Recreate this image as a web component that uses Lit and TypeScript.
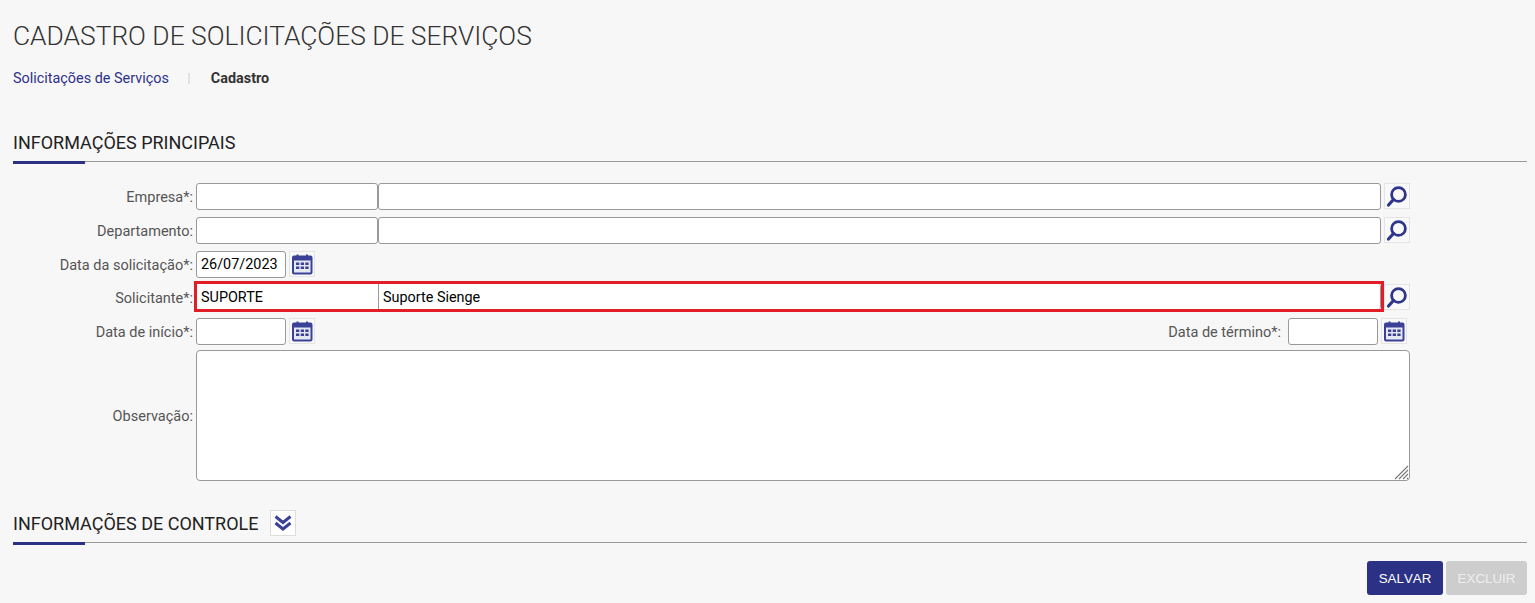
import { LitElement, html, css, svg } from 'lit';
import { customElement } from 'lit/decorators.js';

const searchIcon = svg`<circle cx="13.500" cy="10.500" r="6.900" fill="none" stroke="#2f3589" stroke-width="2.800"/><path d="M8.500 15.500 L3.500 21" stroke="#2f3589" stroke-width="3.200" stroke-linecap="round"/>`;

const calendarIcon = svg`<rect x="3" y="4.500" width="18.500" height="17" rx="1" fill="#e6e8f4" stroke="#3a4196" stroke-width="2"/>
  <path d="M3 4.500h18.500v4H3z" fill="#3a4196"/>
  <path d="M7.500 2.500v3M17 2.500v3" stroke="#3a4196" stroke-width="2"/>
  <path d="M6 10.500h3.300v2.600H6zM10.700 10.500H14v2.600h-3.300zM15.300 10.500h3.300v2.600h-3.300zM6 14.500h3.300v2.600H6zM10.700 14.500H14v2.600h-3.300zM15.300 14.500h3.300v2.600h-3.300z" fill="#3a4196"/>`;

const chevronsIcon = svg`<path d="M4.500 5.500 L12 11.500 L19.500 5.500 M4.500 12 L12 18 L19.500 12" fill="none" stroke="#3a4196" stroke-width="3"/>`;

const gripIcon = svg`<path d="M1 14 L14 1 M5 14 L14 5 M9 14 L14 9 M13 14 L14 13" stroke="#777" stroke-width="1.100"/>`;

@customElement('app-root')
export class AppRoot extends LitElement {
  static styles = css`
    :host {
      display: block;
      height: 603px;
      overflow: hidden;
      background: #f7f7f7;
      font-family: Roboto, "Liberation Sans", sans-serif;
      color: #444;
    }

    .page {
      padding: 21px 8px 0 13px;
    }

    h1 {
      margin: 0;
      height: 30px;
      font-size: 26.350px;
      line-height: 31px;
      font-weight: 300;
      color: #333;
    }

    .crumbs {
      display: flex;
      align-items: center;
      height: 16px;
      margin-top: 19px;
      font-size: 14.400px;
    }

    .crumbs a {
      color: #2e3188;
    }

    .crumbs i {
      width: 2px;
      height: 11px;
      margin: 0 21px 0 19px;
      background: #e2e2e2;
    }

    .crumbs b {
      font-weight: 700;
      color: #333;
    }

    .section {
      position: relative;
      display: flex;
      align-items: center;
      gap: 11px;
      border-bottom: 1px solid #999;
      font-size: 18px;
      color: #222;
    }

    .section::after {
      content: "";
      position: absolute;
      left: 0;
      bottom: -3px;
      width: 72px;
      height: 3px;
      background: #2b3184;
    }

    .main-head {
      height: 28px;
      margin-top: 47px;
      align-items: flex-start;
      line-height: 19px;
    }

    .form {
      display: grid;
      grid-template-columns: 180px 1214px;
      column-gap: 3px;
      margin-top: 21px;
    }

    .form label {
      justify-self: end;
      height: 27px;
      font-size: 14.500px;
      line-height: 29px;
      color: #555;
      white-space: nowrap;
    }

    .form label.middle {
      height: auto;
      align-self: center;
      margin-top: 2px;
      line-height: 17px;
    }

    .row {
      display: flex;
      align-items: flex-start;
      height: 34px;
    }

    .row.date-row {
      height: 33px;
    }

    .row.last {
      height: 32px;
    }

    .row.tall {
      position: relative;
      height: auto;
    }

    .box {
      box-sizing: border-box;
      height: 27px;
      padding: 0 4px;
      border: 1px solid #999;
      border-radius: 3px;
      background: #fff;
      font-size: 14.400px;
      line-height: 26px;
      color: #000;
      white-space: nowrap;
    }

    .code {
      width: 182px;
    }

    .name {
      width: 1003px;
    }

    .date {
      width: 90px;
    }

    .icon {
      box-sizing: border-box;
      flex: none;
      width: 26px;
      height: 26px;
      margin-left: 3px;
      border: 1px solid #e4e4e4;
      background: #f9f9f9;
    }

    .icon svg {
      display: block;
      width: 24px;
      height: 24px;
    }

    .end {
      display: flex;
      align-items: flex-start;
      margin: 0 3px 0 auto;
    }

    .end .box {
      margin-left: 7px;
    }

    .invalid {
      display: flex;
      flex: none;
      box-sizing: border-box;
      width: 1190px;
      height: 31px;
      margin: -3px 0 0 -2px;
      border: 3px solid #e21d26;
    }

    .invalid + .icon {
      margin-left: 0;
    }

    .invalid .box {
      height: 25px;
      line-height: 27px;
      border: 0;
      border-radius: 0;
    }

    .invalid .code {
      width: 182px;
      padding-left: 4px;
      border-right: 1px solid #999;
    }

    .invalid .name {
      flex: 1;
      width: auto;
      border-right: 1px solid #999;
      border-radius: 0 3px 3px 0;
    }

    textarea {
      display: block;
      box-sizing: border-box;
      width: 1214px;
      height: 131px;
      border: 1px solid #999;
      border-radius: 4px;
      background: #fff;
      resize: none;
    }

    .grip {
      position: absolute;
      right: 1px;
      bottom: 1px;
      display: block;
      width: 15px;
      height: 15px;
    }

    .control-head {
      box-sizing: border-box;
      height: 37px;
      padding-bottom: 2px;
      margin-top: 25px;
    }

    .toggle {
      box-sizing: border-box;
      width: 26px;
      height: 26px;
      border: 1px solid #ddd;
      background: #fff;
    }

    .toggle svg {
      display: block;
      width: 24px;
      height: 24px;
    }

    .actions {
      display: flex;
      justify-content: flex-end;
      gap: 3px;
      margin-top: 18px;
    }

    button {
      height: 34px;
      padding: 0;
      border: 0;
      border-radius: 3px;
      font-family: "Liberation Sans", Arial, sans-serif;
      font-size: 13.333px;
      font-kerning: none;
      color: #fff;
    }

    .save {
      width: 76px;
      background: #2b3184;
    }

    .delete {
      width: 81px;
      background: #cdcdcd;
      color: #eee;
    }
  `;

  private search() {
    return html`<div class="icon"><svg viewBox="0 0 24 24">${searchIcon}</svg></div>`;
  }

  private calendar() {
    return html`<div class="icon"><svg viewBox="0 0 24 24">${calendarIcon}</svg></div>`;
  }

  render() {
    return html`
      <div class="page">
        <h1>CADASTRO DE SOLICITAÇÕES DE SERVIÇOS</h1>
        <div class="crumbs">
          <a>Solicitações de Serviços</a>
          <i></i>
          <b>Cadastro</b>
        </div>

        <div class="section main-head">INFORMAÇÕES PRINCIPAIS</div>

        <div class="form">
          <label>Empresa*:</label>
          <div class="row">
            <div class="box code"></div>
            <div class="box name"></div>
            ${this.search()}
          </div>

          <label>Departamento:</label>
          <div class="row">
            <div class="box code"></div>
            <div class="box name"></div>
            ${this.search()}
          </div>

          <label>Data da solicitação*:</label>
          <div class="row date-row">
            <div class="box date">26/07/2023</div>
            ${this.calendar()}
          </div>

          <label>Solicitante*:</label>
          <div class="row">
            <div class="invalid">
              <div class="box code">SUPORTE</div>
              <div class="box name">Suporte Sienge</div>
            </div>
            ${this.search()}
          </div>

          <label>Data de início*:</label>
          <div class="row last">
            <div class="box date"></div>
            ${this.calendar()}
            <div class="end">
              <label>Data de término*:</label>
              <div class="box date"></div>
              ${this.calendar()}
            </div>
          </div>

          <label class="middle">Observação:</label>
          <div class="row tall">
            <textarea></textarea>
            <svg class="grip" viewBox="0 0 15 15">${gripIcon}</svg>
          </div>
        </div>

        <div class="section control-head">
          INFORMAÇÕES DE CONTROLE
          <div class="toggle"><svg viewBox="0 0 24 24">${chevronsIcon}</svg></div>
        </div>

        <div class="actions">
          <button class="save">SALVAR</button>
          <button class="delete">EXCLUIR</button>
        </div>
      </div>
    `;
  }
}
